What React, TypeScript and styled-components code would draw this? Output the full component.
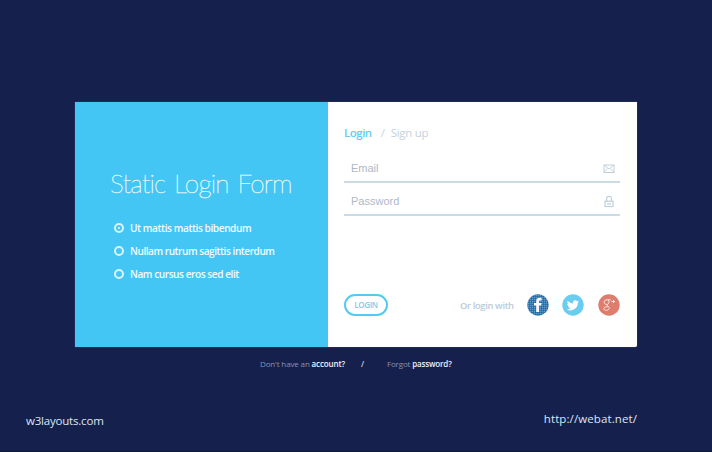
import React from "react";
import styled, { createGlobalStyle } from "styled-components";

const Global = createGlobalStyle`
  * { box-sizing: border-box; }
  body { margin: 0; background: #15204d; font-family: "Open Sans", "Noto Sans", sans-serif; }
`;

const Page = styled.main`
  width: 712px;
  height: 452px;
  padding: 102px 74px 0 75px;
  background: #15204d;
  border-bottom: 1px solid #101838;
  overflow: hidden;
`;

const Card = styled.section`
  display: flex;
  width: 562px;
  height: 245px;
  background: #fff;
  border-radius: 0 0 2px 0;
  box-shadow: 0 0 1px #7f8db5;
`;

const Intro = styled.div`
  width: 253px;
  height: 245px;
  padding: 61px 0 0 35px;
  background: #44c6f5;
  color: #f0fbff;
`;

const Title = styled.h1`
  margin: 0;
  height: 40px;
  font: 100 26px/40px Lato, sans-serif;
  letter-spacing: -0.75px;
  word-spacing: 2px;
  white-space: nowrap;
  -webkit-text-stroke: 0.5px #e6f8ff;
`;

const Options = styled.ul`
  margin: 13px 0 0 4px;
  padding: 0;
  list-style: none;
`;

const Option = styled.li`
  display: flex;
  align-items: center;
  gap: 6px;
  height: 23px;
  font-size: 10.1px;
  font-weight: 600;
`;

const Label = styled.span<{ $spacing: number }>`
  letter-spacing: ${(p) => p.$spacing}px;
  white-space: nowrap;
`;

const Radio = styled.span<{ $checked?: boolean }>`
  display: flex;
  align-items: center;
  justify-content: center;
  width: 10px;
  height: 10px;
  border: 2px solid #d9f4fd;
  border-radius: 50%;
  &::after {
    content: "";
    width: 2px;
    height: 2px;
    border-radius: 50%;
    background: ${(p) => (p.$checked ? "#e9faff" : "transparent")};
  }
`;

const FormPanel = styled.form`
  display: flex;
  flex-direction: column;
  width: 309px;
  padding: 20px 17px 0 16px;
`;

const Tabs = styled.nav`
  display: flex;
  height: 20px;
  align-items: center;
  font-size: 11.5px;
  color: #c8d4df;
  white-space: nowrap;
`;

const Tab = styled.span<{ $active?: boolean }>`
  color: ${(p) => (p.$active ? "#62cdf2" : "#c5d2dd")};
  font-weight: ${(p) => (p.$active ? 600 : 400)};
  letter-spacing: ${(p) => (p.$active ? "-0.5px" : "-0.3px")};
`;

const Slash = styled.span`
  width: 19px;
  padding-left: 9px;
`;

const Field = styled.label<{ $height: number }>`
  display: flex;
  align-items: flex-end;
  justify-content: space-between;
  height: ${(p) => p.$height}px;
  padding: 0 5px 5px 7px;
  border-bottom: 2px solid #c9dce5;
  color: #adb9c7;
  font: 11px/15px "Liberation Sans", Arial, sans-serif;
`;

const Actions = styled.div`
  display: flex;
  align-items: center;
  height: 22px;
  margin-top: 78px;
`;

const LoginButton = styled.button`
  width: 44px;
  height: 22px;
  padding: 0;
  border: 2px solid #55c9f0;
  border-radius: 11px;
  background: #fff;
  color: #75cfed;
  font: 600 8px/16px "Open Sans", sans-serif;
  letter-spacing: -0.3px;
`;

const Alternative = styled.span`
  margin-left: 72px;
  width: 67px;
  color: #b9cbd8;
  font-size: 9.4px;
  font-weight: 600;
  letter-spacing: -0.36px;
  white-space: nowrap;
`;

const Socials = styled.div`
  display: flex;
  gap: 13.6px;
  svg { display: block; }
`;

const Links = styled.div`
  display: flex;
  height: 14px;
  margin: 10px 0 0 185px;
  align-items: center;
  color: #8993ad;
  font-size: 8px;
  line-height: 14px;
  white-space: nowrap;
`;

const LinkText = styled.span<{ $width: number; $spacing: number }>`
  width: ${(p) => p.$width}px;
  letter-spacing: ${(p) => p.$spacing}px;
  b { color: #edf2fa; font-weight: 600; }
`;

const Separator = styled.span`
  width: 26px;
  color: #ccd4e3;
  font-weight: 600;
`;

const Credits = styled.footer`
  display: flex;
  justify-content: space-between;
  margin: 39px 0 0 -49px;
  width: 611px;
  color: #dce6f4;
  font-size: 11.5px;
  line-height: 18px;
`;

const Credit = styled.span<{ $drop?: boolean; $spacing: number }>`
  padding-top: ${(p) => (p.$drop ? 2 : 0)}px;
  letter-spacing: ${(p) => p.$spacing}px;
`;

const MailIcon = () => (
  <svg width="12" height="15" viewBox="0 0 12 15" fill="none" stroke="#bfd0db">
    <rect x="1" y="4" width="10" height="7.5" />
    <path d="M1 4l5 4 5-4M1 11.5l3.5-4M11 11.5l-3.5-4" strokeWidth=".9" />
  </svg>
);

const LockIcon = () => (
  <svg width="12" height="15" viewBox="0 0 12 15" fill="none" stroke="#bfd0db" strokeWidth="1.2">
    <rect x="2" y="7.2" width="8" height="5.3" />
    <path d="M3.6 7.2V4.8q0-2.5 2.4-2.5t2.4 2.5v2.4M4 9.8h4" />
  </svg>
);

const FacebookIcon = () => (
  <svg width="22" height="22" viewBox="0 0 22 22">
    <defs>
      <pattern id="weave" width="2" height="2" patternUnits="userSpaceOnUse">
        <path fill="#3d78a8" d="M0 0h2v2H0z" />
        <path fill="#445f8c" d="M0 0h1v1H0z" />
        <path fill="#45a4d2" d="M1 1h1v1H1z" />
      </pattern>
    </defs>
    <circle cx="11" cy="11" r="10.7" fill="url(#weave)" />
    <path fill="#f5fbff" d="M9.2 18v-6.4H7V8.9h2.2V7.2c0-2.4 1.3-3.5 3.4-3.5h2v2.7h-1.4c-.9 0-1.1.4-1.1 1.1v1.4h2.5l-.4 2.7h-2.1V18z" />
  </svg>
);

const TwitterIcon = () => (
  <svg width="22" height="22" viewBox="0 0 22 22">
    <circle cx="11" cy="11" r="10.7" fill="#68cdef" />
    <path fill="#fff" transform="translate(5 5) scale(.51)" d="M23.6 4.9c-.9.4-1.8.7-2.8.8 1-.6 1.8-1.6 2.2-2.7-1 .6-2 1-3.1 1.2a4.9 4.9 0 0 0-8.4 4.5C7.5 8.5 3.8 6.5 1.3 3.5a4.9 4.9 0 0 0 1.5 6.6c-.8 0-1.6-.2-2.2-.6v.1c0 2.4 1.7 4.4 3.9 4.8-.7.2-1.5.2-2.2.1a4.9 4.9 0 0 0 4.6 3.4A9.9 9.9 0 0 1-.4 19.9a13.9 13.9 0 0 0 21.5-12.4c1-.7 1.8-1.6 2.5-2.6z" />
  </svg>
);

const GoogleIcon = () => (
  <svg width="22" height="22" viewBox="0 0 22 22">
    <circle cx="11" cy="11" r="10.7" fill="#de7c6e" />
    <g fill="none" stroke="#fbece9" strokeWidth="1">
      <path d="M12.6 5.8H9.4C6.8 5.8 6 7 6.2 8.5c.3 1.6 1.7 2.2 3.2 1.8 1.8-.4 2.2-2.9.7-4.2M9.2 10.4c-.7 1 .2 1.2 1.2 2.1 1.7 1.5.5 3.7-1.7 3.8-3.2.2-3.8-2.5-1.4-3.3.8-.3 1.6-.3 2.4-.2M13.5 7.5h3.5M15.5 6v3" />
    </g>
  </svg>
);

export default function App() {
  return (
    <>
      <Global />
      <Page>
        <Card>
          <Intro>
            <Title>Static Login Form</Title>
            <Options>
              <Option><Radio $checked /><Label $spacing={-0.42}>Ut mattis mattis bibendum</Label></Option>
              <Option><Radio /><Label $spacing={-0.47}>Nullam rutrum sagittis interdum</Label></Option>
              <Option><Radio /><Label $spacing={-0.45}>Nam cursus eros sed elit</Label></Option>
            </Options>
          </Intro>
          <FormPanel>
            <Tabs><Tab $active>Login</Tab><Slash>/</Slash><Tab>Sign up</Tab></Tabs>
            <Field $height={41}>Email<MailIcon /></Field>
            <Field $height={33}>Password<LockIcon /></Field>
            <Actions>
              <LoginButton type="button">LOGIN</LoginButton>
              <Alternative>Or login with</Alternative>
              <Socials><FacebookIcon /><TwitterIcon /><GoogleIcon /></Socials>
            </Actions>
          </FormPanel>
        </Card>
        <Links>
          <LinkText $width={101} $spacing={-0.14}>Don't have an <b>account?</b></LinkText>
          <Separator>/</Separator>
          <LinkText $width={66} $spacing={-0.16}>Forgot <b>password?</b></LinkText>
        </Links>
        <Credits>
          <Credit $drop $spacing={-0.2}>w3layouts.com</Credit>
          <Credit $spacing={0.1}>http://webat.net/</Credit>
        </Credits>
      </Page>
    </>
  );
}
